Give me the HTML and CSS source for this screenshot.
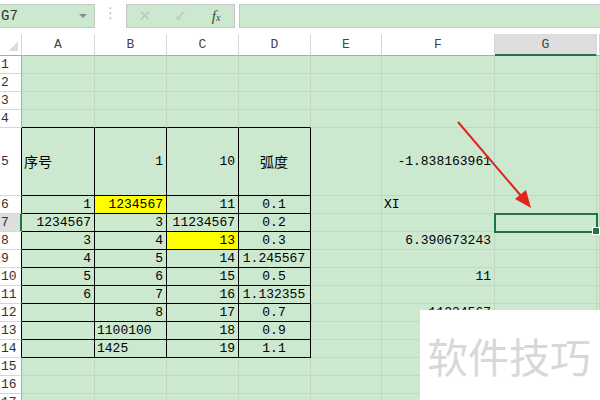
FILE: index.html
```html
<!DOCTYPE html>
<html lang="zh">
<head>
    <meta charset="UTF-8">
    <meta name="viewport" content="width=device-width, initial-scale=1.0">
    <title>工作表 - G7</title>
    <link rel="stylesheet" href="styles.css">
</head>
<body>
    <div class="app">
        <div class="toolbar">
            <div class="namebox"><span>G7</span><span class="caret"></span></div>
            <div class="grip">⋮</div>
            <div class="fnbtns">
                <span class="fn-x">✕</span>
                <span class="fn-ok">✓</span>
                <span class="fn-fx">f<small>x</small></span>
            </div>
            <div class="formula"></div>
        </div>

        <table class="sheet">
            <colgroup>
                <col class="c-rh">
                <col class="c-a">
                <col class="c-b">
                <col class="c-c">
                <col class="c-d">
                <col class="c-e">
                <col class="c-f">
                <col class="c-g">
                <col class="c-h">
            </colgroup>
            <thead>
                <tr>
                    <th class="corner"></th>
                    <th>A</th><th>B</th><th>C</th><th>D</th><th>E</th><th>F</th>
                    <th class="active">G</th><th></th>
                </tr>
            </thead>
            <tbody>
                <tr><th>1</th><td></td><td></td><td></td><td></td><td></td><td></td><td></td><td></td></tr>
                <tr><th>2</th><td></td><td></td><td></td><td></td><td></td><td></td><td></td><td></td></tr>
                <tr><th>3</th><td></td><td></td><td></td><td></td><td></td><td></td><td></td><td></td></tr>
                <tr><th>4</th><td class="tt"></td><td class="tt"></td><td class="tt"></td><td class="tt"></td><td></td><td></td><td></td><td></td></tr>
                <tr class="tall">
                    <th class="tl">5</th>
                    <td class="t"><span class="zh">序号</span></td>
                    <td class="t num">1</td>
                    <td class="t num">10</td>
                    <td class="t mid"><span class="zh">弧度</span></td>
                    <td></td>
                    <td class="num">-1.838163961</td>
                    <td></td><td></td>
                </tr>
                <tr>
                    <th class="tl">6</th>
                    <td class="t num">1</td>
                    <td class="t num hl">1234567</td>
                    <td class="t num">11</td>
                    <td class="t mid">0.1</td>
                    <td></td>
                    <td>XI</td>
                    <td></td><td></td>
                </tr>
                <tr>
                    <th class="tl active">7</th>
                    <td class="t num">1234567</td>
                    <td class="t num">3</td>
                    <td class="t num">11234567</td>
                    <td class="t mid">0.2</td>
                    <td></td>
                    <td></td>
                    <td class="sel"></td><td></td>
                </tr>
                <tr>
                    <th class="tl">8</th>
                    <td class="t num">3</td>
                    <td class="t num">4</td>
                    <td class="t num hl">13</td>
                    <td class="t mid">0.3</td>
                    <td></td>
                    <td class="num">6.390673243</td>
                    <td></td><td></td>
                </tr>
                <tr>
                    <th class="tl">9</th>
                    <td class="t num">4</td>
                    <td class="t num">5</td>
                    <td class="t num">14</td>
                    <td class="t mid">1.245567</td>
                    <td></td><td></td><td></td><td></td>
                </tr>
                <tr>
                    <th class="tl">10</th>
                    <td class="t num">5</td>
                    <td class="t num">6</td>
                    <td class="t num">15</td>
                    <td class="t mid">0.5</td>
                    <td></td>
                    <td class="num">11</td>
                    <td></td><td></td>
                </tr>
                <tr>
                    <th class="tl">11</th>
                    <td class="t num">6</td>
                    <td class="t num">7</td>
                    <td class="t num">16</td>
                    <td class="t mid">1.132355</td>
                    <td></td><td></td><td></td><td></td>
                </tr>
                <tr>
                    <th class="tl">12</th>
                    <td class="t"></td>
                    <td class="t num">8</td>
                    <td class="t num">17</td>
                    <td class="t mid">0.7</td>
                    <td class="mark"></td>
                    <td class="num">11234567</td>
                    <td></td><td></td>
                </tr>
                <tr>
                    <th class="tl">13</th>
                    <td class="t"></td>
                    <td class="t">1100100</td>
                    <td class="t num">18</td>
                    <td class="t mid">0.9</td>
                    <td></td><td></td><td></td><td></td>
                </tr>
                <tr>
                    <th class="tl">14</th>
                    <td class="t"></td>
                    <td class="t">1425</td>
                    <td class="t num">19</td>
                    <td class="t mid">1.1</td>
                    <td></td><td></td><td></td><td></td>
                </tr>
                <tr><th>15</th><td></td><td></td><td></td><td></td><td></td><td></td><td></td><td></td></tr>
                <tr><th>16</th><td></td><td></td><td></td><td></td><td></td><td></td><td></td><td></td></tr>
                <tr><th>17</th><td></td><td></td><td></td><td></td><td></td><td></td><td></td><td></td></tr>
            </tbody>
        </table>

        <!-- annotation arrow pointing at G7 -->
        <svg class="arrow" width="600" height="400" viewBox="0 0 600 400">
            <line x1="458" y1="122" x2="522" y2="197" stroke="#e2231f" stroke-width="2"/>
            <polygon points="531,208 515,199 526,190" fill="#e2231f"/>
        </svg>

        <div class="watermark">软件技巧</div>
    </div>
</body>
</html>
```

FILE: styles.css
```css
:root {
    --sheet-bg: #cce8cf;
    --grid-line: #c2d6c4;
    --head-line: #d6d6d6;
    --head-edge: #ababab;
    --box-border: #c6c6c6;
    --active-head: #dedede;
    --excel-green: #217346;
    --ink: #000;
}

* {
    box-sizing: border-box;
}

body {
    margin: 0;
    width: 600px;
    height: 400px;
    overflow: hidden;
    background: #fff;
    font-family: "Liberation Mono", "Noto Sans CJK SC", monospace;
}

.app {
    position: relative;
    width: 600px;
    height: 400px;
    overflow: hidden;
}

/* formula bar */
.toolbar {
    display: flex;
    align-items: flex-start;
    height: 34px;
    padding-top: 4px;
}

.namebox {
    display: flex;
    align-items: center;
    justify-content: space-between;
    width: 97px;
    height: 24px;
    margin-left: -2px;
    padding: 0 7px 0 2px;
    border: 1px solid var(--box-border);
    background: var(--sheet-bg);
    font-size: 14px;
    color: #333;
}

.caret {
    width: 0;
    height: 0;
    border-left: 4px solid transparent;
    border-right: 4px solid transparent;
    border-top: 4px solid #8a8a8a;
}

.grip {
    width: 31px;
    height: 24px;
    line-height: 24px;
    text-align: center;
    font: 15px "DejaVu Sans", sans-serif;
    color: #c4c4c4;
}

.fnbtns {
    display: flex;
    align-items: center;
    width: 109px;
    height: 24px;
    border: 1px solid var(--box-border);
    background: var(--sheet-bg);
}

.fnbtns span {
    width: 36px;
    text-align: center;
}

.fn-x,
.fn-ok {
    font: 15px "DejaVu Sans", sans-serif;
    color: #b9c9bb;
}

.fn-fx {
    font: italic 15px "Liberation Serif", serif;
    color: #444;
}

.fn-fx small {
    font-size: 10px;
}

.formula {
    flex: 1;
    height: 24px;
    margin: 0 -2px 0 4px;
    border: 1px solid var(--box-border);
    background: var(--sheet-bg);
}

/* grid */
.sheet {
    width: 600px;
    table-layout: fixed;
    border-collapse: separate;
    border-spacing: 0;
    background: var(--sheet-bg);
    font-size: 13px;
    color: var(--ink);
}

.c-rh { width: 22px; }
.c-a { width: 73px; }
.c-b { width: 72px; }
.c-c { width: 72px; }
.c-d { width: 72px; }
.c-e { width: 71px; }
.c-f { width: 113px; }
.c-g { width: 102px; }
.c-h { width: 3px; }

.sheet th,
.sheet td {
    height: 18px;
    padding: 0 3px 0 2px;
    border-right: 1px solid var(--grid-line);
    border-bottom: 1px solid var(--grid-line);
    line-height: 16px;
    white-space: nowrap;
    overflow: visible;
    font-weight: normal;
    vertical-align: middle;
}

.sheet thead th {
    height: 22px;
    padding: 0;
    background: #fff;
    color: #444;
    text-align: center;
    border-right-color: var(--head-line);
    border-bottom-color: var(--head-edge);
}

.sheet thead th.corner {
    background: #fff linear-gradient(135deg, transparent 50%, #dcdcdc 50%) no-repeat right 3px bottom 4px / 10px 10px;
}

.sheet thead th.active {
    background: var(--active-head);
    border-bottom-color: var(--excel-green);
    box-shadow: inset 0 -1px var(--excel-green);
}

.sheet tbody th {
    padding: 0 0 0 1px;
    background: #fff;
    color: #333;
    text-align: left;
    border-right-color: var(--head-edge);
    border-bottom-color: var(--head-line);
}

.sheet tbody th.tl {
    border-right-color: var(--ink);
}

.sheet tbody th.active {
    background: var(--active-head);
    border-right-color: var(--excel-green);
    box-shadow: inset -1px 0 var(--excel-green);
}

.sheet tr.tall th,
.sheet tr.tall td {
    height: 68px;
}

.sheet td.t {
    border-right-color: var(--ink);
    border-bottom-color: var(--ink);
}

.sheet td.tt {
    border-bottom-color: var(--ink);
}

.num { text-align: right; }
.mid { text-align: center; }

.hl {
    background: #ffff00;
}

.zh {
    font: 14px "Noto Sans CJK SC", sans-serif;
}

.mark {
    box-shadow: inset 1px 0 #f3b48f;
}

/* selected cell G7 */
.sel {
    position: relative;
    outline: 2px solid var(--excel-green);
    outline-offset: -1px;
}

.sel::after {
    content: "";
    position: absolute;
    right: -4px;
    bottom: -4px;
    width: 6px;
    height: 6px;
    background: var(--excel-green);
    border: 1px solid #fff;
}

.arrow {
    position: absolute;
    top: 0;
    left: 0;
    pointer-events: none;
}

.watermark {
    position: absolute;
    left: 420px;
    top: 310px;
    width: 180px;
    height: 90px;
    padding-left: 7px;
    background: #fff;
    font: 41px/90px "Noto Sans CJK SC", sans-serif;
    color: #d8d8d8;
    white-space: nowrap;
}
```
